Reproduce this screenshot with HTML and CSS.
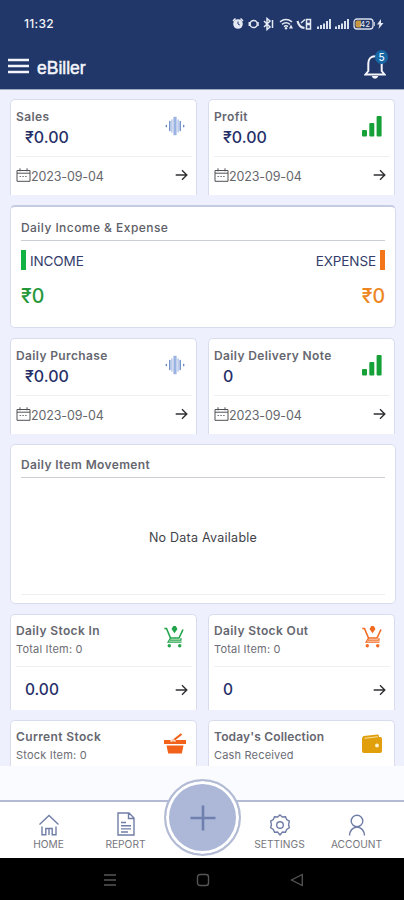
FILE: index.html
```
<!DOCTYPE html>
<html lang="en">
<head>
<meta charset="utf-8">
<meta name="viewport" content="width=device-width">
<title>eBiller</title>
<link rel="stylesheet" href="styles.css">
</head>
<body>
<svg class="defs" aria-hidden="true">
  <symbol id="wave" viewBox="0 0 20 20">
    <g fill="none" stroke="#5f82c6" stroke-width="1.300" stroke-linecap="round"><path d="M1.300 9.300v1.400M4.800 5.500v9M15.200 5.500v9M18.700 9.300v1.400"/><path stroke="#9bb3e2" stroke-width="3.200" stroke-linecap="butt" d="M10 .8v18.400"/><path stroke="#a9bce6" d="M6.900 4v12M13.100 4v12"/></g>
  </symbol>
  <symbol id="bars" viewBox="0 0 20 22">
    <g fill="#15a038"><rect x="0" y="15" width="5" height="6.500" rx="1"/><rect x="7.300" y="8" width="5" height="13.500" rx="1"/><rect x="14.600" y="1" width="5" height="20.500" rx="1"/></g>
  </symbol>
  <symbol id="cal" viewBox="0 0 15 14">
    <path d="M1 2.500h13v10.800H1zM1 5.200h13M4 .3v3M11 .3v3" fill="none" stroke="#505156"/><path d="M3.500 8.500h8" stroke="#77787c" stroke-dasharray="1.600 1.200"/>
  </symbol>
  <symbol id="arrow" viewBox="0 0 13 12">
    <path d="M.7 6h11M7 1.300 11.800 6 7 10.700" fill="none" stroke="#303034" stroke-width="1.400"/>
  </symbol>
  <symbol id="cart" viewBox="0 0 20 22">
    <g fill="none" stroke="currentColor" stroke-width="1.600"><path d="M.3 2.500h2.200L6.500 12h8.500L19 3.500"/><path d="M6.500 12 4 16.200h13.500M6 14.200h11V12" stroke-width="1.200"/></g>
    <g fill="currentColor"><path d="M9.300 0h2.400l1.800 3-3 4.200-3-4.200z"/><circle cx="5.300" cy="19.700" r="1.700"/><circle cx="15.700" cy="19.700" r="1.700"/></g>
  </symbol>
</svg>

<header class="top">
  <div class="status">
    <span class="clock">11:32</span>
    <svg class="status-icons" width="152" height="14" viewBox="0 0 152 14">
      <g fill="none" stroke="#e4e9f3" stroke-width="1.500">
        <path stroke-width="1.600" d="m1 4 2.500-2.500M8.500 1.500 11 4"/>
        <circle cx="21.700" cy="7" r="3.600"/><path d="M17.300 5v4M26 5v4"/>
        <path d="m32 4 6 6-3 2.500v-11L38 4l-6 6M40.500 3v8"/>
        <path d="M48 4.800q6-4.500 12 0M50 7.300q4-3 8 0M52 9.600q2-1.500 4 0"/>
        <path stroke-width="2.200" d="M65.500 4q1.500 6.500 7 7"/><path d="m69 6 4-3.500M74.500 2.500h4v4h-4zM74.500 7.500h4V12h-4z"/>
      </g>
      <circle cx="6" cy="7" r="4.800" fill="#e4e9f3"/><path d="M6 4.500V7l1.800 1" fill="none" stroke="#22376b"/>
      <circle cx="54" cy="11.300" r="1.200" fill="#e4e9f3"/><path d="m59 7.500 2 4h-4z" fill="#e4e9f3"/>
      <path fill="#d9e0ed" d="M85 9.500h2V12h-2zM88 8h2v4h-2zM91 6.500h2V12h-2zM94 4h2v8h-2zM97 2h2v10h-2zM103 9.500h2V12h-2zM106 8h2v4h-2zM109 6.500h2V12h-2zM112 4h2v8h-2zM115 2h2v10h-2z"/>
      <rect x="122" y="2" width="19" height="10" rx="3" fill="#22376b" stroke="#d9e0ed" stroke-width="1.300"/>
      <path d="M125 3.500h4v7h-4a2 2 0 0 1-1.500-2v-3a2 2 0 0 1 1.500-2z" fill="#c9973e"/><path d="M142.300 5v4" stroke="#d9e0ed"/>
      <text x="128" y="10" font-size="8" fill="#e4e9f3" class="batt">42</text>
      <path d="m149 2-4 5.500h2.500L146.500 12l5-6H149z" fill="#e4e9f3"/>
    </svg>
  </div>
  <div class="bar">
    <svg width="21" height="16" viewBox="0 0 21 16"><path d="M0 2h21M0 8h21M0 14h21" stroke="#f3f5fa" stroke-width="2.500"/></svg>
    <h1>eBiller</h1>
    <div class="bell">
      <svg width="22" height="26" viewBox="0 0 22 26"><path d="M4.300 18V10.500C4.300 6 7 3.200 11 3.200s6.700 2.800 6.700 7.300V18l2.800 3.500h-19z" fill="none" stroke="#f3f5fa" stroke-width="2"/><path d="M7.700 23h6.600q-.8 2.800-3.300 2.800T7.700 23z" fill="#f3f5fa"/></svg>
      <span class="badge">5</span>
    </div>
  </div>
</header>

<main class="feed">
  <div class="row">
    <section class="card tile"><div class="head"><h2>Sales</h2><p class="amount">₹0.00</p><svg class="pic wave"><use href="#wave"/></svg></div><div class="foot"><svg class="cal"><use href="#cal"/></svg><span class="date">2023-09-04</span><svg class="arrow"><use href="#arrow"/></svg></div></section>
    <section class="card tile"><div class="head"><h2>Profit</h2><p class="amount">₹0.00</p><svg class="pic bars"><use href="#bars"/></svg></div><div class="foot"><svg class="cal"><use href="#cal"/></svg><span class="date">2023-09-04</span><svg class="arrow"><use href="#arrow"/></svg></div></section>
  </div>
  <section class="card wide flow">
    <h2>Daily Income &amp; Expense</h2>
    <div class="pair"><span class="label income">INCOME</span><span class="label expense">EXPENSE</span></div>
    <div class="pair sums"><span class="green">₹0</span><span class="orange">₹0</span></div>
  </section>
  <div class="row">
    <section class="card tile"><div class="head"><h2>Daily Purchase</h2><p class="amount">₹0.00</p><svg class="pic wave"><use href="#wave"/></svg></div><div class="foot"><svg class="cal"><use href="#cal"/></svg><span class="date">2023-09-04</span><svg class="arrow"><use href="#arrow"/></svg></div></section>
    <section class="card tile"><div class="head"><h2>Daily Delivery Note</h2><p class="amount">0</p><svg class="pic bars"><use href="#bars"/></svg></div><div class="foot"><svg class="cal"><use href="#cal"/></svg><span class="date">2023-09-04</span><svg class="arrow"><use href="#arrow"/></svg></div></section>
  </div>
  <section class="card wide movement">
    <h2>Daily Item Movement</h2>
    <p class="empty">No Data Available</p>
  </section>
  <div class="row stock">
    <section class="card tile"><div class="head"><h2>Daily Stock In</h2><p class="sub">Total Item: 0</p><svg class="pic cart in"><use href="#cart"/></svg></div><div class="foot"><span class="amount">0.00</span><svg class="arrow"><use href="#arrow"/></svg></div></section>
    <section class="card tile"><div class="head"><h2>Daily Stock Out</h2><p class="sub">Total Item: 0</p><svg class="pic cart out"><use href="#cart"/></svg></div><div class="foot"><span class="amount">0</span><svg class="arrow"><use href="#arrow"/></svg></div></section>
  </div>
  <div class="row stock">
    <section class="card tile"><div class="head"><h2>Current Stock</h2><p class="sub">Stock Item: 0</p>
      <svg class="pic basket" viewBox="0 0 22 22"><path d="M0 7h22v4H0zM2.500 12.500h17l-1.700 8H4.200z" fill="#f2621b"/><path d="M8 8.500 17.500 1" stroke="#f2621b" stroke-width="2.200"/><path d="M6.500 8.500q3-2.500 5 0" fill="none" stroke="#fbd5bd" stroke-width="1.800"/></svg></div></section>
    <section class="card tile"><div class="head"><h2 class="snug">Today's Collection</h2><p class="sub">Cash Received</p>
      <svg class="pic wallet" viewBox="0 0 20 20"><path d="M0 4 1.500 2 15.500.5Q17 .5 17 2v1h1.500Q20 3 20 5v12q0 2-2 2H2q-2 0-2-2z" fill="#e19f0c"/><path d="M2.500 4.300 16 2.700" stroke="#f8dfa0"/><circle cx="15" cy="11.500" r="1.900" fill="#fff3cf"/></svg></div></section>
  </div>
</main>

<div class="shelf"></div>
<nav class="tabs">
  <a class="tab"><svg width="22" height="22" viewBox="0 0 22 22"><path d="m1.500 10.500 9.500-9 9.500 9M4 12.500v8.300h3.800v-6.300h6.400v6.300H18v-8.300M11 14.500v6.500"/></svg>HOME</a>
  <a class="tab"><svg width="22" height="24" viewBox="0 0 22 24"><path d="M3 1h11l5 5v17H3zM13.500 1v5.500H19M6 10.500h5M6 13.700h10M6 16.900h10M6 20h7"/></svg>REPORT</a>
  <a class="add"><svg width="26" height="26" viewBox="0 0 26 26"><path d="M13 .5v25M.5 13h25" stroke="#6f80ae" stroke-width="2.600"/></svg></a>
  <a class="tab"><svg width="22" height="22" viewBox="0 0 22 22"><path d="m11 1 2.500 2 3-.3 1.200 2.900 2.600 1.600-.7 3.300.7 3.300-2.600 1.700-1.200 2.800-3-.3L11 21l-2.500-3-3 .3-1.200-2.800L1.700 13.800l.7-3.300-.7-3.300 2.600-1.600 1.200-2.900 3 .3z"/><circle cx="11" cy="11" r="3.300"/></svg>SETTINGS</a>
  <a class="tab"><svg width="22" height="22" viewBox="0 0 22 22"><circle cx="11" cy="7" r="5.800"/><path d="M3.500 21.500Q4 14 11 13q7 1 7.500 8.500"/></svg>ACCOUNT</a>
</nav>
<footer class="system">
  <svg width="12" height="14" viewBox="0 0 12 14"><path d="M0 2h12M0 7h12M0 12h12" stroke="#555" stroke-width="1.300"/></svg>
  <svg width="14" height="14" viewBox="0 0 14 14"><rect x="1.500" y="1.500" width="11" height="11" rx="2.500" fill="none" stroke="#555" stroke-width="1.400"/></svg>
  <svg width="14" height="14" viewBox="0 0 14 14"><path d="M12.300 1.500v11L1.500 7z" fill="none" stroke="#555" stroke-width="1.300"/></svg>
</footer>
</body>
</html>
```
FILE: styles.css
```
* { box-sizing: border-box; margin: 0; padding: 0; }
body { width: 404px; height: 900px; overflow: hidden; display: flex; flex-direction: column; background: #eef1fd; font-family: Inter, "Open Sans", sans-serif; color: #54555d; }
.defs { position: absolute; width: 0; height: 0; }
svg { flex: none; }

.top { height: 90px; flex: none; background: #213669; border-bottom: 1px solid #9eacc0; color: #f3f5fa; }
.status { height: 47px; display: flex; justify-content: space-between; align-items: center; padding: 0 20px 0 24px; }
.clock { font: 500 12px/16px Inter, sans-serif; letter-spacing: .3px; }
.batt { font-family: Inter, sans-serif; }
.bar { height: 42px; display: flex; align-items: center; padding: 0 18px 5px 8px; gap: 8px; }
.bar h1 { font: 500 17.500px/24px "Liberation Sans", sans-serif; -webkit-text-stroke: .5px #f3f5fa; margin-top: 4px; }
.bell { position: relative; margin-left: auto; height: 26px; }
.badge { position: absolute; left: 11px; top: -3px; width: 13px; height: 14px; border-radius: 7px; background: #1767a5; color: #e5f4ff; text-align: center; font: 500 10px/14px Inter, sans-serif; }

.feed { height: 676px; flex: none; overflow: hidden; padding: 9px 8px 0 10px; display: flex; flex-direction: column; gap: 10px; }
.row { display: grid; grid-template-columns: 187px 187px; gap: 11px; height: 96px; flex: none; }
.card { background: #fff; border: 1px solid #d9dcec; border-radius: 5px; }
.tile { border-bottom: 0; border-radius: 5px 5px 0 0; padding: 0 4px 0 5px; }
.head { position: relative; height: 57px; padding-top: 8px; border-bottom: 1px solid #eeeff3; }
.stock .head { height: 52px; }
h2 { font: 600 12px/17px Inter, sans-serif; letter-spacing: .37px; color: #666770; white-space: nowrap; }
h2.snug { letter-spacing: .15px; }
.stock h2 { margin-top: -1px; }
.amount { font: 500 16px/20px Inter, sans-serif; color: #262f68; padding-left: 9px; margin-top: 2px; }
.sub { font-size: 11px; line-height: 16px; margin-top: 2px; color: #6c6d75; letter-spacing: .18px; }
.pic { position: absolute; }
.wave { width: 20px; height: 20px; right: 7px; top: 16px; }
.bars { width: 20px; height: 22px; right: 8px; top: 15px; }
.cart { width: 20px; height: 22px; right: 8px; top: 11px; }
.basket { width: 22px; height: 22px; right: 6px; top: 12px; }
.wallet { width: 20px; height: 20px; right: 8px; top: 13px; }
.in { color: #22a44a; }
.out { color: #ef6b20; }
.foot { height: 38px; display: flex; align-items: center; padding-right: 4px; }
.foot .amount { margin-top: 8px; font-size: 15.500px; }
.cal { width: 15px; height: 14px; margin-top: -2px; }
.date { font-size: 12.500px; letter-spacing: -.13px; color: #66676d; }
.arrow { width: 13px; height: 12px; margin: -2px 0 0 auto; }
.foot .amount + .arrow { margin-top: 7px; }

.wide { width: 386px; flex: none; padding: 0 10px; }
.wide h2 { padding-top: 12px; height: 35px; border-bottom: 1px solid #ccced5; }
.flow { height: 123px; border-top: 2px solid #c6cbe4; }
.flow h2 { height: 34px; font-weight: 500; letter-spacing: .45px; color: #5d5e67; }
.pair { display: flex; justify-content: space-between; margin-top: 9px; }
.label { font-size: 13.500px; line-height: 22px; height: 20px; letter-spacing: -.1px; color: #343d6b; }
.income { border-left: 5px solid #12b342; padding-left: 4px; }
.expense { border-right: 5px solid #f3761b; padding-right: 4px; }
.sums { margin-top: 13px; font: 500 19.500px/26px Inter, sans-serif; }
.green { color: #26983c; }
.orange { color: #ed8522; }
.movement { height: 160px; }
.movement h2 { height: 33px; padding-top: 11px; }
.empty { height: 117px; border-bottom: 1px solid #eceef2; text-align: center; font-size: 12.500px; line-height: 119px; letter-spacing: .25px; color: #414248; }

.shelf { height: 34px; flex: none; background: #fafbff; }
.tabs { position: relative; height: 58px; flex: none; background: #fff; border-top: 2px solid #b3bbd4; display: grid; grid-template-columns: repeat(5, 77px); padding-left: 10px; }
.tab { display: flex; flex-direction: column; align-items: center; justify-content: flex-end; gap: 1px; padding-bottom: 6px; font-size: 10.200px; line-height: 15px; color: #75767d; }
.tab svg { fill: none; stroke: #707da6; stroke-width: 1.400; }
.add { position: absolute; left: 164px; top: -23px; width: 77px; height: 77px; border: 2px solid #b3bcd4; border-radius: 50%; background: #adb8d9; box-shadow: inset 0 0 0 3px #fff; display: grid; place-items: center; }
.tab:nth-child(4) { grid-column: 4; }
.system { height: 42px; flex: none; background: #000; display: flex; align-items: center; justify-content: space-between; padding: 1px 100px 0 104px; }
```
